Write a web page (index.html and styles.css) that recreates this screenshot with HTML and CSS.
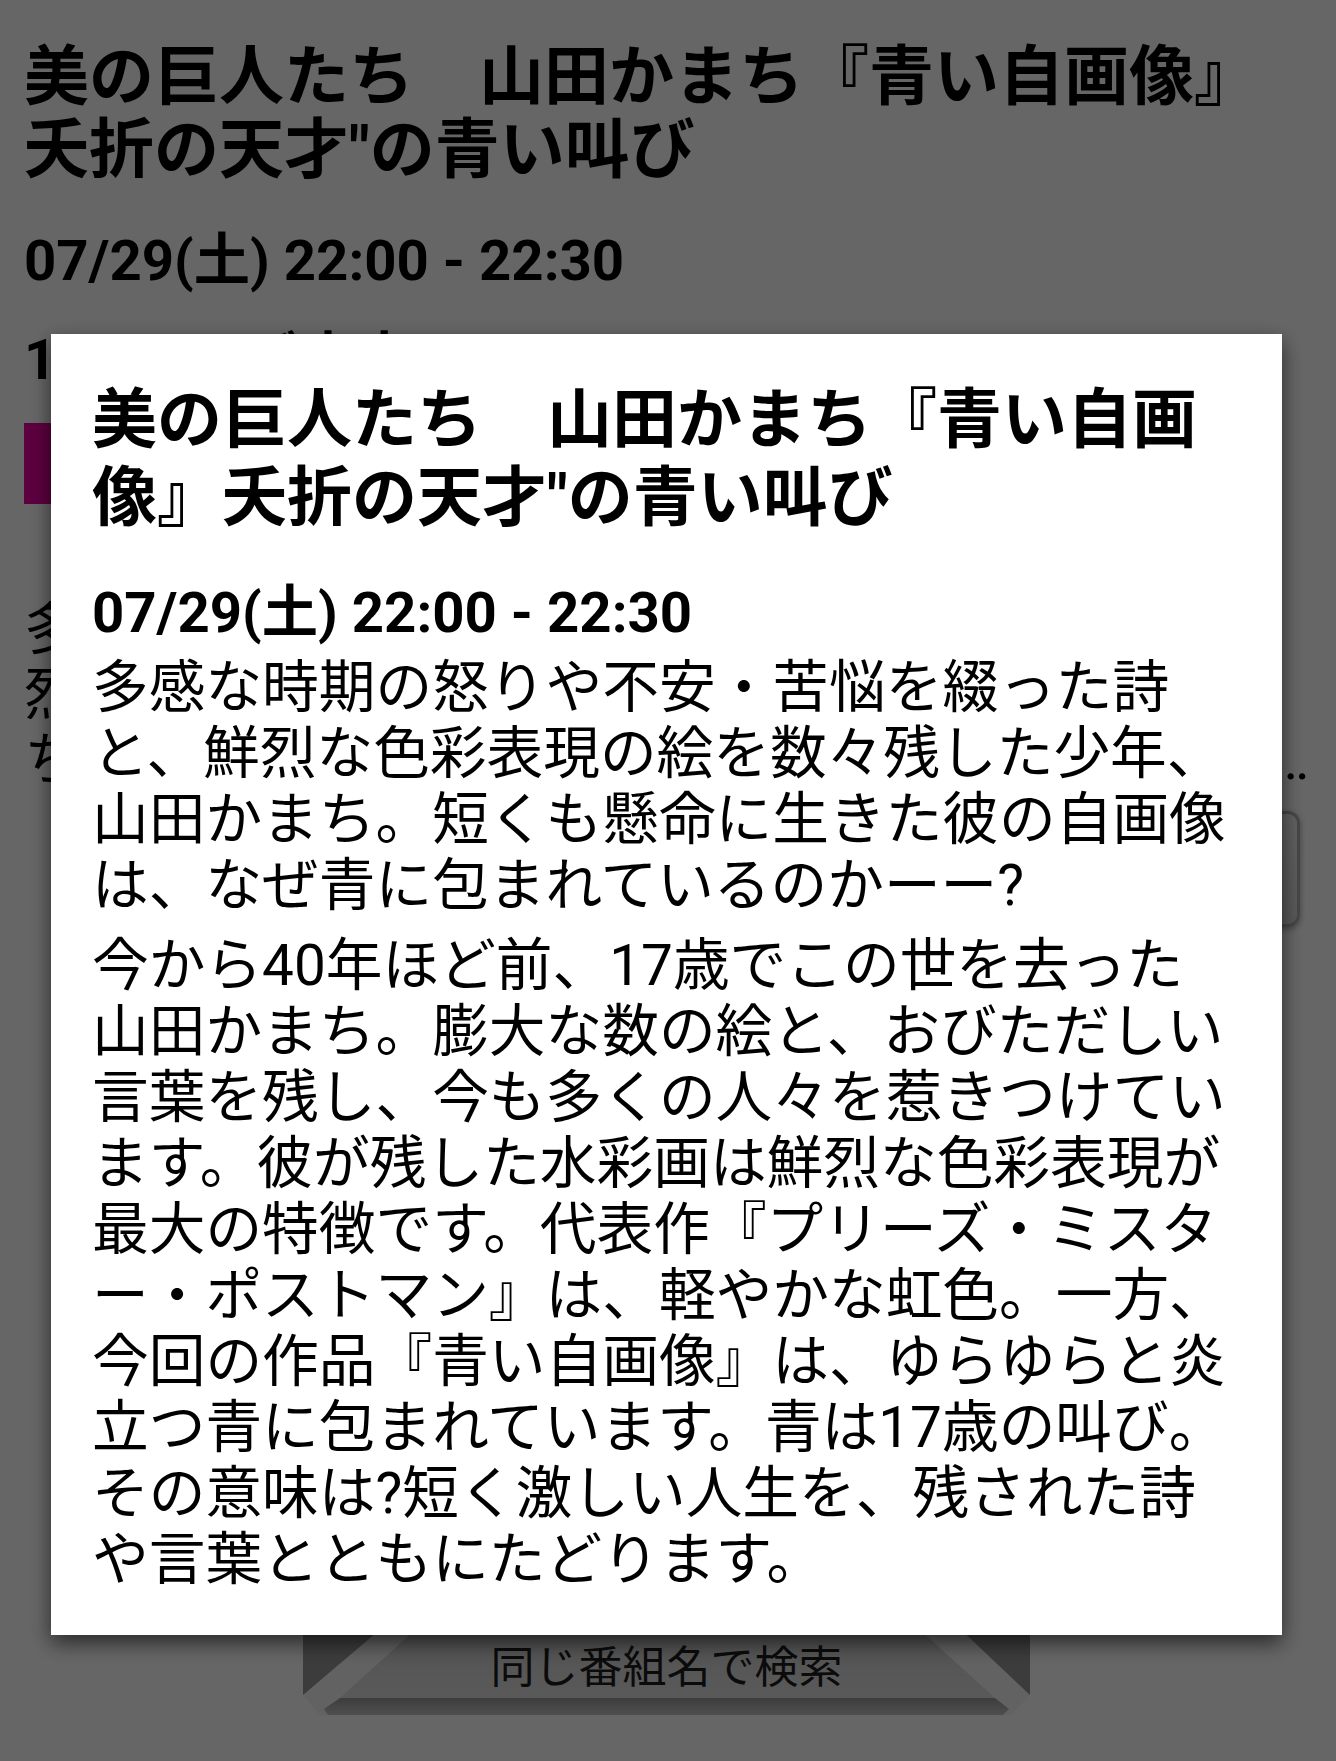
FILE: index.html
```html
<!DOCTYPE html>
<html lang="ja">
<head>
    <meta charset="UTF-8">
    <meta name="viewport" content="width=device-width, initial-scale=1.0">
    <title>番組詳細</title>
    <link rel="stylesheet" href="styles.css">
</head>
<body>
    <div class="page">
        <h1 class="program-title">美の巨人たち　山田かまち『青い自画像』夭折の天才"の青い叫び</h1>
        <p class="program-time">07/29(土) 22:00 - 22:30</p>
        <p class="program-channel">1ch テレビ東京</p>
        <div class="genre-tag">ドキュメンタリー／教養</div>
        <p class="program-desc">多感な時期の怒りや不安・苦悩を綴った詩と、鮮烈な色彩表現の絵を数々残した少年、山田かまち。短くも懸命に生きた彼の自画像は、なぜ青に包まれているのかーー?今から40年ほど前、17歳でこの世を去った山田かまち。</p>
        <div class="action-row">
            <button class="action-btn">予約する</button>
            <button class="action-btn">共有する</button>
        </div>
        <div class="search-wrap">
            <button class="search-btn">
                <svg class="search-bevel" viewBox="0 0 727 127" width="727" height="127">
                    <defs>
                        <linearGradient id="face" x1="0" y1="0" x2="0" y2="1">
                            <stop offset="0" stop-color="#c4c4c4"/>
                            <stop offset="1" stop-color="#e0e0e0"/>
                        </linearGradient>
                        <linearGradient id="base" x1="0" y1="0" x2="0" y2="1">
                            <stop offset="0" stop-color="#999999"/>
                            <stop offset="1" stop-color="#c4c4c4"/>
                        </linearGradient>
                    </defs>
                    <rect x="0" y="0" width="727" height="107" fill="#969696"/>
                    <polygon points="126,0 614,0 727,107 708,127 17,127 0,107" fill="#f4f4f4"/>
                    <polygon points="158,0 571,0 692,110 37,110" fill="url(#face)"/>
                    <polygon points="37,110 692,110 706,121 700,127 25,127 21,121" fill="url(#base)"/>
                </svg>
                <span class="search-label">同じ番組名で検索</span>
            </button>
        </div>
    </div>

    <div class="scrim"></div>

    <div class="dialog">
        <h2 class="dialog-title">美の巨人たち　山田かまち『青い自画像』夭折の天才"の青い叫び</h2>
        <p class="dialog-time">07/29(土) 22:00 - 22:30</p>
        <p class="dialog-text">多感な時期の怒りや不安・苦悩を綴った詩と、鮮烈な色彩表現の絵を数々残した少年、山田かまち。短くも懸命に生きた彼の自画像は、なぜ青に包まれているのかーー?</p>
        <p class="dialog-text">今から40年ほど前、17歳でこの世を去った山田かまち。膨大な数の絵と、おびただしい言葉を残し、今も多くの人々を惹きつけています。彼が残した水彩画は鮮烈な色彩表現が最大の特徴です。代表作『プリーズ・ミスター・ポストマン』は、軽やかな虹色。一方、今回の作品『青い自画像』は、ゆらゆらと炎立つ青に包まれています。青は17歳の叫び。その意味は?短く激しい人生を、残された詩や言葉とともにたどります。</p>
    </div>
</body>
</html>
```

FILE: styles.css
```css
body {
    margin: 0;
    font-family: Roboto, "Noto Sans CJK JP", sans-serif;
    color: #000;
    background: #fff;
}
.page {
    padding: 41px 16px 0 24px;
}
.program-title {
    margin: 0;
    font-size: 65px;
    line-height: 73px;
    font-weight: bold;
}
.program-time {
    margin: 41px 0 0;
    font-size: 56.3px;
    line-height: 66px;
    font-weight: bold;
}
.program-channel {
    margin: 33px 0 0;
    font-size: 56.3px;
    line-height: 66px;
    font-weight: bold;
}
.genre-tag {
    margin-top: 30px;
    width: 420px;
    height: 81px;
    box-sizing: border-box;
    padding-left: 60px;
    background: #e6009e;
    color: #fff;
    font-size: 40px;
    line-height: 81px;
}
.program-desc {
    margin: 93px 0 0;
    font-size: 56.7px;
    line-height: 65px;
    display: -webkit-box;
    -webkit-line-clamp: 3;
    -webkit-box-orient: vertical;
    overflow: hidden;
}
.action-row {
    display: flex;
    justify-content: flex-end;
    gap: 32px;
    margin-top: 19px;
    padding-right: 20px;
}
.action-btn {
    width: 580px;
    height: 116px;
    border: 3px solid #b0b0b0;
    border-radius: 12px;
    background: linear-gradient(#f2f2f2, #dadada);
    box-shadow: 0 2px 6px rgba(0, 0, 0, 0.35);
    font-family: inherit;
    font-size: 44px;
    color: #222;
}
.search-wrap {
    display: flex;
    margin-top: 661px;
    padding-left: 279px;
}
.search-btn {
    display: grid;
    width: 727px;
    height: 127px;
    padding: 0;
    border: 0;
    background: none;
    font-family: inherit;
}
.search-bevel,
.search-label {
    grid-area: 1 / 1;
}
.search-label {
    align-self: start;
    justify-self: center;
    padding-top: 50px;
    font-family: "Noto Sans CJK JP", sans-serif;
    font-size: 44px;
    line-height: 52px;
    color: #1c1c1c;
}
.scrim {
    position: fixed;
    top: 0;
    left: 0;
    right: 0;
    bottom: 0;
    background: rgba(0, 0, 0, 0.6);
}
.dialog {
    position: fixed;
    top: 334px;
    left: 51px;
    width: 1231px;
    box-sizing: border-box;
    padding: 47px 53px 42px 41px;
    background: #fff;
    box-shadow: 0 8px 20px rgba(0, 0, 0, 0.6);
}
.dialog-title {
    margin: 0;
    font-size: 65px;
    line-height: 78px;
    font-weight: bold;
}
.dialog-time {
    margin: 43px 0 0;
    font-size: 56.3px;
    line-height: 66px;
    font-weight: bold;
}
.dialog-text {
    margin: 9px 0 0;
    font-size: 56.7px;
    line-height: 66px;
}
.dialog-text + .dialog-text {
    margin-top: 14px;
}
```
